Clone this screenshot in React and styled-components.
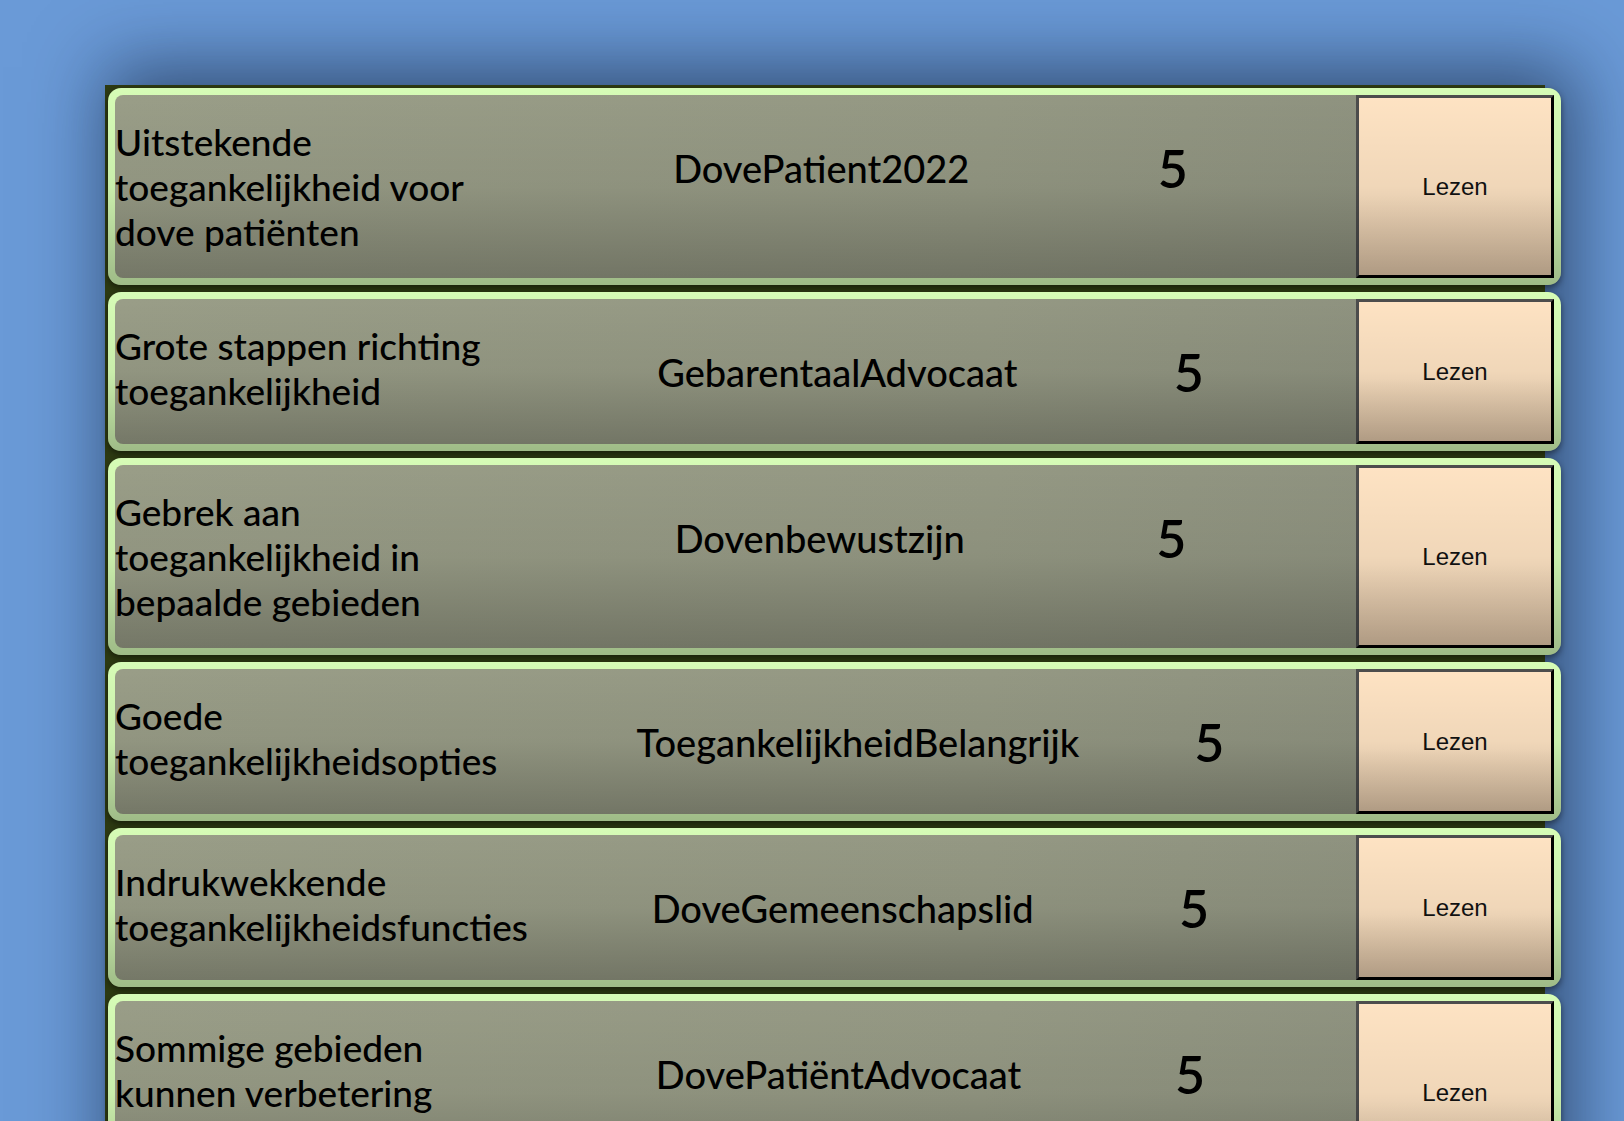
import React from "react";
import styled, { createGlobalStyle } from "styled-components";

const reviews = [
  {
    title: "Uitstekende toegankelijkheid voor dove patiënten",
    user: "DovePatient2022",
    score: 5,
  },
  {
    title: "Grote stappen richting toegankelijkheid",
    user: "GebarentaalAdvocaat",
    score: 5,
  },
  {
    title: "Gebrek aan toegankelijkheid in bepaalde gebieden",
    user: "Dovenbewustzijn",
    score: 5,
  },
  {
    title: "Goede toegankelijkheidsopties",
    user: "ToegankelijkheidBelangrijk",
    score: 5,
  },
  {
    title: "Indrukwekkende toegankelijkheidsfuncties",
    user: "DoveGemeenschapslid",
    score: 5,
  },
  {
    title: "Sommige gebieden kunnen verbetering gebruiken",
    user: "DovePatiëntAdvocaat",
    score: 5,
  },
];

const GlobalStyle = createGlobalStyle`
  html, body {
    margin: 0;
    padding: 0;
    overflow: hidden;
  }
  body {
    background: #6a9ad7;
    font-family: Lato, "Noto Sans", sans-serif;
    color: #000;
  }
`;

const Page = styled.main`
  min-height: 100vh;
  box-sizing: border-box;
  padding: 85px 0 0 105px;
`;

const List = styled.section`
  width: 1440px;
  box-sizing: border-box;
  padding: 3px 0 40px 3px;
  background: #2d3a12;
  display: flex;
  flex-direction: column;
  gap: 7px;
  box-shadow: 16px -4px 70px 14px rgba(8, 18, 40, 0.55);
`;

const Row = styled.article`
  position: relative;
  flex: none;
  width: 1453px;
  box-sizing: border-box;
  padding: 7px;
  border-radius: 13px;
  background: #d6fcb6;
  box-shadow: 0 3px 6px rgba(0, 0, 0, 0.45);

  /* soft darkening towards the bottom of every card */
  &::after {
    content: "";
    position: absolute;
    inset: 0;
    border-radius: inherit;
    pointer-events: none;
    background: linear-gradient(
      to bottom,
      rgba(0, 0, 0, 0) 0%,
      rgba(0, 0, 0, 0.06) 50%,
      rgba(0, 0, 0, 0.26) 100%
    );
  }
`;

const Inner = styled.div`
  display: flex;
  align-items: flex-start;
  min-height: 145px;
  border-radius: 8px 0 0 8px;
  background: linear-gradient(100deg, #9a9e88 0%, #959984 60%, #8c907e 100%);
`;

const Title = styled.h2`
  flex: none;
  width: 464px;
  box-sizing: border-box;
  padding-right: 40px;
  margin: 24px 0;
  font-size: 37px;
  line-height: 45px;
  font-weight: 500;
`;

const User = styled.div`
  flex: 1 1 auto;
  height: 145px;
  display: flex;
  align-items: center;
  justify-content: center;
  white-space: nowrap;
  font-size: 38px;
  font-weight: 500;
`;

const Score = styled(User)`
  font-size: 52px;
  font-weight: 600;
`;

const ReadButton = styled.button`
  flex: none;
  align-self: stretch;
  width: 198px;
  margin-left: 74px;
  box-sizing: border-box;
  border-style: solid;
  border-width: 3px;
  border-color: #4d4d4d #000 #000 #4d4d4d;
  background: linear-gradient(to bottom, #ffe4c4 55%, #e6cbac 100%);
  font-family: "Liberation Sans", Arial, sans-serif;
  font-size: 24px;
  color: #111;
  cursor: pointer;
`;

const App = () => {
  return (
    <Page>
      <GlobalStyle />
      <List>
        {reviews.map((r) => (
          <Row key={r.user}>
            <Inner>
              <Title>{r.title}</Title>
              <User>{r.user}</User>
              <Score>{r.score}</Score>
              <ReadButton>Lezen</ReadButton>
            </Inner>
          </Row>
        ))}
      </List>
    </Page>
  );
};

export default App;
